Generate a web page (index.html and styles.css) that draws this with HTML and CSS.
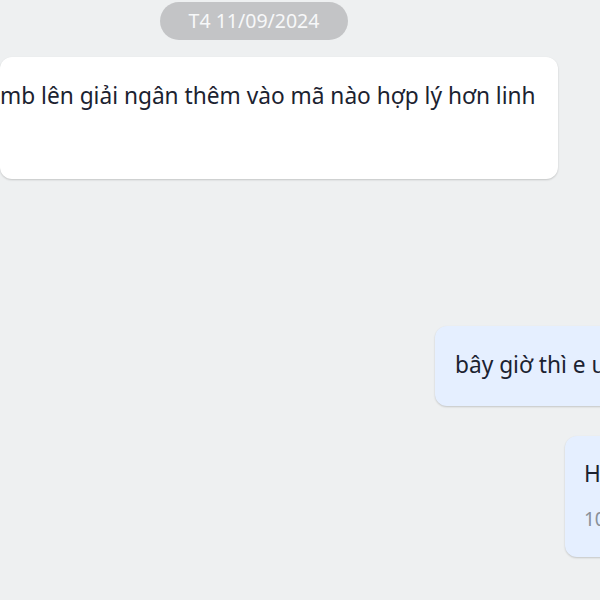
FILE: index.html
```html
<!DOCTYPE html>
<html lang="vi">
<head>
<meta charset="utf-8">
<link rel="stylesheet" href="styles.css">
</head>
<body>
<div class="chat">
  <div class="date-row"><span class="date-pill">T4 11/09/2024</span></div>
  <div class="msg-row in">
    <div class="bubble white"><p class="text">mb lên giải ngân thêm vào mã nào hợp lý hơn linh</p></div>
  </div>
  <div class="msg-row out first">
    <div class="bubble blue b1"><p class="text">bây giờ thì e ưu tiên mã nào</p></div>
  </div>
  <div class="msg-row out second">
    <div class="bubble blue b2"><p class="text">Hiện tại</p><p class="time">10:15</p></div>
  </div>
</div>
</body>
</html>
```
FILE: styles.css
```css
html, body {
  margin: 0;
  padding: 0;
  width: 600px;
  height: 600px;
  overflow: hidden;
  background: #eef0f1;
  font-family: "Noto Sans", "Open Sans", sans-serif;
}
.chat {
  display: flex;
  flex-direction: column;
  width: 600px;
  height: 600px;
  overflow: hidden;
}
.date-row {
  display: flex;
  padding-top: 2px;
  padding-left: 160px;
}
.date-pill {
  width: 188px;
  height: 38px;
  border-radius: 19px;
  background: #c3c4c6;
  color: #f7f8f9;
  font-size: 19.5px;
  line-height: 38px;
  text-align: center;
}
.msg-row {
  display: flex;
}
.msg-row.in {
  margin-top: 17px;
}
.msg-row.first {
  margin-top: 147px;
  padding-left: 435px;
}
.msg-row.second {
  margin-top: 30px;
  padding-left: 565px;
}
.bubble {
  border-radius: 12px;
  box-shadow: 0 1px 2px rgba(0, 0, 0, 0.18);
  flex-shrink: 0;
}
.white {
  background: #ffffff;
  width: 558px;
  height: 122px;
  box-sizing: border-box;
  padding: 24px 0 0 0;
}
.blue {
  background: #e5efff;
  box-sizing: border-box;
}
.b1 {
  height: 80px;
  padding: 24px 20px 0 20px;
}
.b2 {
  height: 121px;
  padding: 23px 20px 0 19px;
}
.text {
  margin: 0;
  font-size: 22.7px;
  line-height: 30px;
  color: #1b2230;
  white-space: nowrap;
}
.time {
  margin: 18px 0 0 0;
  font-size: 19px;
  line-height: 24px;
  color: #8a9098;
  white-space: nowrap;
}
```
